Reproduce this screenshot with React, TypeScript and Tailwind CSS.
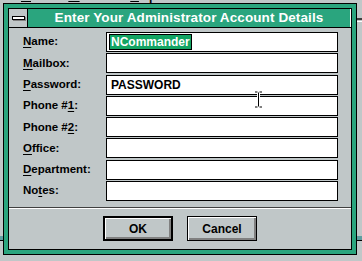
import React from "react";

const fields = [
  { pre: "", key: "N", post: "ame:" },
  { pre: "", key: "M", post: "ailbox:" },
  { pre: "", key: "P", post: "assword:" },
  { pre: "Phone #", key: "1", post: ":" },
  { pre: "Phone #", key: "2", post: ":" },
  { pre: "", key: "O", post: "ffice:" },
  { pre: "", key: "D", post: "epartment:" },
  { pre: "No", key: "t", post: "es:" },
];

function Label({ pre, k, post }: { pre: string; k: string; post: string }) {
  return (
    <span className="w-[83px] shrink-0 text-[11.5px] font-bold text-black">
      {pre}
      <span className="underline underline-offset-2">{k}</span>
      {post}
    </span>
  );
}

function WinButton({ label, isDefault }: { label: string; isDefault?: boolean }) {
  return (
    <button
      className={
        "h-[25px] w-[70px] bg-[#c0c7c8] border-black " +
        (isDefault ? "border-2" : "border")
      }
    >
      <span className="flex h-full w-full items-center justify-center text-[12px] font-bold text-black shadow-[inset_1px_1px_0_#fff,inset_-2px_-2px_0_#808080]">
        {label}
      </span>
    </button>
  );
}

export default function App() {
  return (
    <div
      className="relative h-[261px] w-[362px] overflow-hidden bg-[#c0c7c8]"
      style={{ fontFamily: '"Liberation Sans", Arial, sans-serif' }}
    >
      {/* menu bar of the window behind */}
      <div className="h-[3px] overflow-hidden">
        <div className="-mt-[11px] flex gap-[16px] pl-[21px] text-[12px] font-bold leading-[14px] text-black">
          <span><span className="underline">M</span>enu</span>
          <span><span className="underline">W</span>indow</span>
          <span><span className="underline">H</span>elp</span>
        </div>
      </div>

      {/* bits of the windows behind */}
      <div className="absolute left-[357px] top-[18px] h-[2px] w-[5px] bg-[#404040]" />
      <div className="absolute left-[357px] top-[21px] h-[1px] w-[5px] bg-white" />
      <div className="absolute left-0 top-[236px] h-[4px] w-[4px] bg-[#5f9ea0]" />
      <div className="absolute left-0 top-[240px] h-[1px] w-[4px] bg-black" />
      <div className="absolute left-[357px] top-[236px] h-[4px] w-[5px] bg-[#5f9ea0]" />
      <div className="absolute left-[357px] top-[240px] h-[1px] w-[5px] bg-black" />

      {/* dialog */}
      <div className="absolute left-[3px] top-[3px] w-[354px] border border-black bg-[#2aa57e] p-[4px]">
        <div className="flex flex-col border border-black bg-[#c0c7c8]">
          {/* title bar */}
          <div className="flex h-[19px] border-b border-black">
            <div className="flex w-[19px] shrink-0 items-center justify-center border-r border-black bg-[#c0c7c8]">
              <div className="h-[4px] w-[13px] border border-black bg-white shadow-[1px_1px_0_#808080]" />
            </div>
            <div className="flex flex-1 items-center justify-center border-r border-white bg-[#2aa57e] text-[13.5px] font-bold tracking-[0.1px] text-white">
              Enter Your Administrator Account Details
            </div>
          </div>

          {/* client */}
          <div className="flex h-[221px] flex-col">
            <div className="flex flex-col gap-[1.3px] pl-[14px] pr-[13px] pt-[4px]">
              {fields.map((f, i) => (
                <div key={i} className="flex h-[20px] items-center">
                  <Label pre={f.pre} k={f.key} post={f.post} />
                  <div className="flex h-full flex-1 items-center border border-black bg-white pl-[2px] text-[12px] font-bold text-black">
                    {i === 0 && (
                      <span className="border border-black bg-[#13a463] px-[1px] leading-[14px] text-white">
                        NCommander
                      </span>
                    )}
                    {i === 2 && <span className="pl-[2px]">PASSWORD</span>}
                  </div>
                </div>
              ))}
            </div>

            <div className="mt-[6px] h-[1px] bg-[#404040]" />
            <div className="h-[1px] bg-white" />

            <div className="flex justify-center gap-[14px] pt-[7px]">
              <WinButton label="OK" isDefault />
              <WinButton label="Cancel" />
            </div>
          </div>
        </div>
      </div>

      {/* I-beam mouse cursor */}
      <svg className="absolute left-[254px] top-[91px]" width="9" height="17" viewBox="0 0 9 17">
        <path d="M1 1H3.5M5.5 1H8M4.5 1.5V15.5M1 16H3.5M5.5 16H8" stroke="white" strokeWidth="3" fill="none" />
        <path d="M1 1H3.5M5.5 1H8M4.5 1.5V15.5M1 16H3.5M5.5 16H8" stroke="black" strokeWidth="1" fill="none" />
      </svg>
    </div>
  );
}
